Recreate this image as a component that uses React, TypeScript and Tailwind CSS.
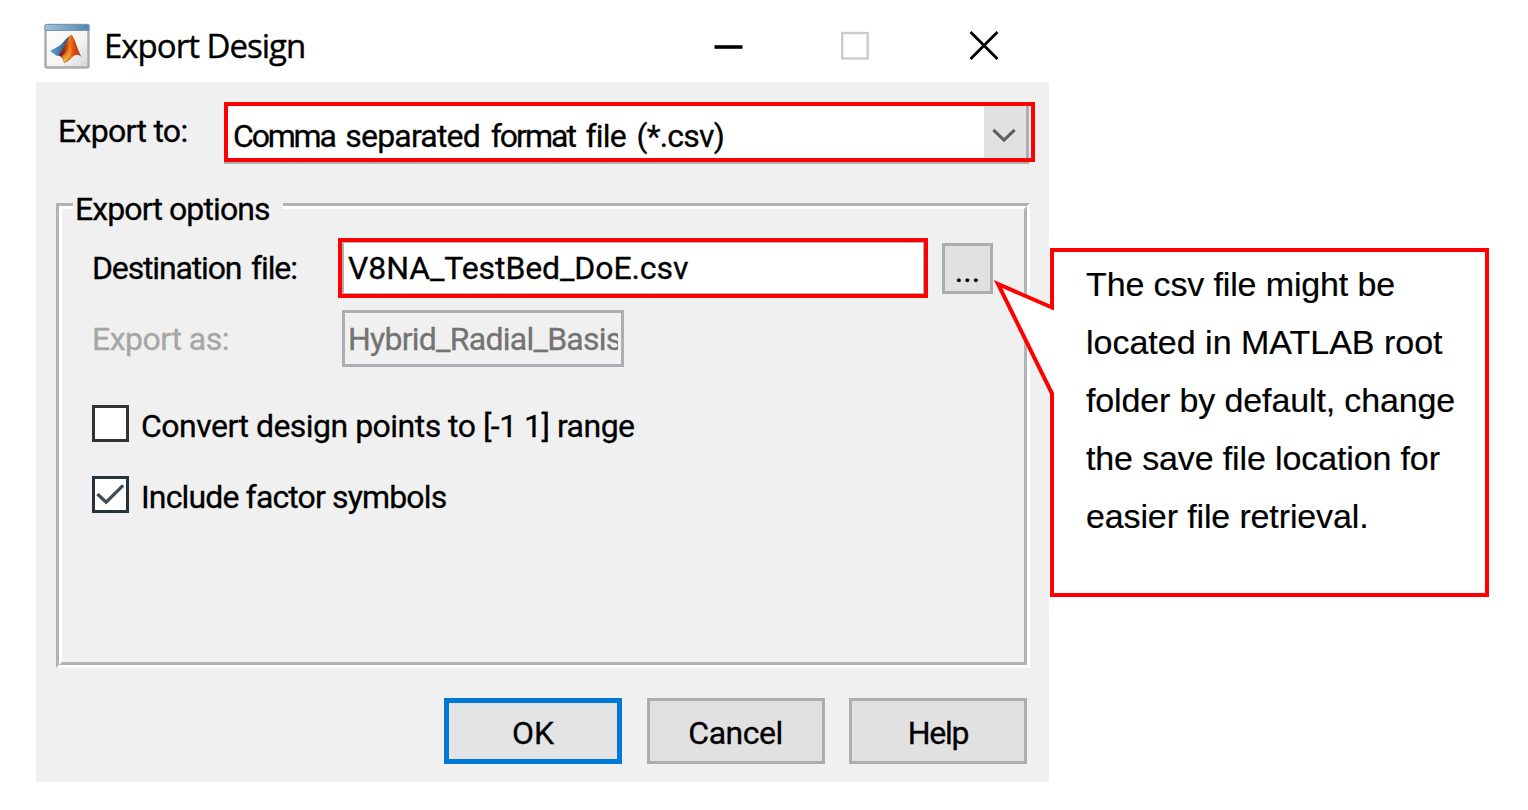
import type { ReactNode } from "react";

const dialogFont =
  "font-[Roboto,sans-serif] text-[32px] leading-[40px] whitespace-pre [-webkit-text-stroke:0.3px_currentColor]";

function MatlabIcon() {
  return (
    <svg width="46" height="46" viewBox="0 0 46 46" className="shrink-0">
      <defs>
        <linearGradient id="frame" x1="0" y1="0" x2="1" y2="1">
          <stop offset="0" stopColor="#ffffff" />
          <stop offset="0.6" stopColor="#f4f4f5" />
          <stop offset="1" stopColor="#d4d5d8" />
        </linearGradient>
        <linearGradient id="bar" x1="0" y1="0" x2="1" y2="0">
          <stop offset="0" stopColor="#a3c3dc" />
          <stop offset="1" stopColor="#4f88b4" />
        </linearGradient>
        <linearGradient id="flame" x1="0" y1="0" x2="1" y2="0">
          <stop offset="0" stopColor="#5c1f20" />
          <stop offset="0.3" stopColor="#a83214" />
          <stop offset="0.5" stopColor="#ee7a1c" />
          <stop offset="0.7" stopColor="#d9480f" />
          <stop offset="1" stopColor="#b5361a" />
        </linearGradient>
        <linearGradient id="glow" x1="0" y1="0" x2="0" y2="1">
          <stop offset="0" stopColor="#f08020" stopOpacity="0" />
          <stop offset="1" stopColor="#ffd23c" />
        </linearGradient>
        <linearGradient id="blade" x1="0" y1="0" x2="1" y2="0">
          <stop offset="0" stopColor="#5fa6d8" />
          <stop offset="1" stopColor="#24507c" />
        </linearGradient>
      </defs>
      <rect x="1.5" y="2" width="43" height="42.500" rx="1.5" fill="url(#frame)" stroke="#a9aaae" strokeWidth="2.4" />
      <rect x="1" y="1.500" width="44" height="6" rx="1" fill="url(#bar)" stroke="#7896ac" strokeWidth="1" />
      <path d="M6 28L15 23C18 21.500 20 18 23 15L26 12.500L20 29L13 33Z" fill="url(#blade)" />
      <path d="M14 32.500C19 28 22 18 27 11.500C31 14 33 26 37.500 34C34 31 32 31 28.500 34C26 37 22 40 20 39.500C19 35 17 33 14 32.500Z" fill="url(#flame)" />
      <path d="M26 20L27.500 22C28 28 27 34 21 39.500C19.500 37 19 35 18 33C22 31 24 26 26 20Z" fill="url(#glow)" />
    </svg>
  );
}

function TitleBar() {
  return (
    <header className="flex h-[82px] shrink-0 items-start bg-white pl-2">
      <div className="mt-[23px]">
        <MatlabIcon />
      </div>
      <h1 className="mt-[25px] ml-[14px] w-[300px] font-['Open_Sans',sans-serif] text-[33px] leading-[42px] font-normal tracking-[-1px] whitespace-nowrap text-black [-webkit-text-stroke:0.4px_currentColor]">
        Export Design
      </h1>
      <svg width="30" height="30" viewBox="0 0 30 30" className="mt-[31px] ml-[310px]">
        <path d="M0.500 16H28.500" stroke="#000" strokeWidth="3.6" />
      </svg>
      <svg width="30" height="30" viewBox="0 0 30 30" className="mt-[31px] ml-[97px]">
        <rect x="1.200" y="2" width="25.500" height="25.500" fill="none" stroke="#cbcbcb" strokeWidth="2.400" />
      </svg>
      <svg width="30" height="30" viewBox="0 0 30 30" className="mt-[31px] ml-[98px]">
        <path d="M1.500 1L28.500 28M28.500 1L1.500 28" stroke="#000" strokeWidth="2.800" />
      </svg>
    </header>
  );
}

function DialogButton({
  children,
  primary = false,
  tracking = "",
}: {
  children: ReactNode;
  primary?: boolean;
  tracking?: string;
}) {
  return (
    <button
      className={`${dialogFont} ${tracking} flex h-[66px] w-[178px] items-center justify-center pt-1 ${
        primary ? "border-[5px] border-[#0078d7] bg-[#e2e4e6]" : "border-[3px] border-[#adadad] bg-[#e1e1e1]"
      }`}
    >
      {children}
    </button>
  );
}

function CheckRow({ checked = false, children }: { checked?: boolean; children: ReactNode }) {
  return (
    <label className="flex h-[37px] items-center gap-[12px]">
      <span className={`size-[37px] shrink-0 border-[3px] bg-white ${checked ? "border-[#26323c]" : "border-[#333333]"}`}>
        {checked && (
          <svg width="31" height="31" viewBox="0 0 32 32">
            <path d="M2.500 15.500L11.500 24L29 6.500" fill="none" stroke="#414c55" strokeWidth="3.400" />
          </svg>
        )}
      </span>
      <span className="pt-[4px]">{children}</span>
    </label>
  );
}

function ExportOptions() {
  return (
    <section className="mt-[39px] ml-5 h-[465px] w-[974px] border-[3px] border-t-[#b3b3b3] border-r-white border-b-white border-l-[#b3b3b3]">
      <div className="h-full border-[3px] border-t-white border-r-[#b3b3b3] border-b-[#b3b3b3] border-l-white">
        <h2 className={`${dialogFont} relative -mt-[20px] ml-[11px] w-[210px] bg-[#f0f0f0] pl-[2px] font-normal tracking-[-0.9px]`}>
          Export options
        </h2>
        <div className="mt-[9px] flex items-start pl-[30px]">
          <span className={`${dialogFont} mt-[10px] w-[246px] tracking-[-1.15px] [word-spacing:3px]`}>
            Destination file:
          </span>
          <div className={`${dialogFont} h-[60px] w-[590px] border-4 border-[#ff0000] bg-white tracking-[-0.1px]`}>
            <div className="flex h-full items-center border border-l-2 border-[#b0b2b8] pl-1">
              V8NA_TestBed_DoE.csv
            </div>
          </div>
          <button className={`${dialogFont} mt-[5px] ml-[14px] flex h-[51px] w-[51px] items-center justify-center border-[3px] border-[#adadad] bg-[#e1e1e1] pt-1`}>
            ...
          </button>
        </div>
        <div className="mt-[12px] flex items-start pl-[30px] text-[#a6a6a6]">
          <span className={`${dialogFont} mt-[9px] w-[250px] tracking-[-0.5px]`}>Export as:</span>
          <div className={`${dialogFont} flex h-[57px] w-[282px] items-center border-[3px] border-[#adaeb3] pr-[3px] pl-[3px] tracking-[-0.75px] text-[#737373]`}>
            <span className="overflow-hidden">Hybrid_Radial_Basis</span>
          </div>
        </div>
        <div className={`${dialogFont} mt-[38px] flex flex-col gap-[34px] pl-[30px]`}>
          <div className="tracking-[-0.52px]">
            <CheckRow>Convert design points to [-1 1] range</CheckRow>
          </div>
          <div className="tracking-[-0.86px]">
            <CheckRow checked>Include factor symbols</CheckRow>
          </div>
        </div>
      </div>
    </section>
  );
}

function ExportDialog() {
  return (
    <main className="ml-9 flex h-[782px] w-[1013px] shrink-0 flex-col bg-[#f0f0f0] text-black">
      <TitleBar />
      <div className="flex items-start pt-5 pl-[22px]">
        <span className={`${dialogFont} mt-[9px] w-[166px] tracking-[-0.7px]`}>Export to:</span>
        <div className="h-[62px] w-[811px]">
          <div className="flex h-[60px] border-4 border-[#ff0000] bg-[#f0f0f0]">
            <div className={`${dialogFont} flex w-[756px] items-center bg-white pt-2 pl-[5px] tracking-[-0.8px]`}>
              <span className="[word-spacing:3.5px]">
                <span className="tracking-[-2.2px]">Comma</span> separated{" "}
                <span className="tracking-[-2px]">format</span> file (*.csv)
              </span>
            </div>
            <div className="flex w-[45px] items-center justify-center border-r-[3px] border-[#adadb3] bg-[#e1e1e1] pt-[7px] pr-[2px]">
              <svg width="24" height="17" viewBox="0 0 26 18">
                <path d="M1.500 3L13 14L24.500 3" fill="none" stroke="#606060" strokeWidth="3.400" />
              </svg>
            </div>
          </div>
          <div className="h-[2px] w-[805px] bg-[#b0b0b4]" />
        </div>
      </div>
      <ExportOptions />
      <footer className="mt-[30px] flex gap-[24.500px] pl-[408px]">
        <DialogButton primary>OK</DialogButton>
        <DialogButton tracking="tracking-[-0.5px]">Cancel</DialogButton>
        <DialogButton tracking="tracking-[-1.3px]">Help</DialogButton>
      </footer>
    </main>
  );
}

function Callout() {
  return (
    <aside className="relative mt-[248px] ml-px h-[349px] w-[439px] shrink-0 border-4 border-[#ff0000] bg-white pt-[3px] pl-8">
      <svg className="absolute -top-1 -left-[68px]" width="68" height="160" viewBox="0 0 68 160">
        <path d="M64 60L12 36L64 145H68V60Z" fill="#fff" />
        <path d="M66 58V59.500L12 36L66 145.500V150" fill="none" stroke="#f00" strokeWidth="4" strokeMiterlimit="10" />
      </svg>
      <p className="font-['Liberation_Sans',Arial,sans-serif] text-[34px] leading-[58px] tracking-[-0.13px] whitespace-nowrap text-black [-webkit-text-stroke:0.2px_currentColor]">
        The csv file might be<br />
        <span className="tracking-normal">located in MATLAB root</span><br />
        folder by default, change<br />
        the save file location for<br />
        easier file retrieval.
      </p>
    </aside>
  );
}

export default function App() {
  return (
    <div className="flex h-[810px] w-[1528px] items-start overflow-hidden bg-white">
      <ExportDialog />
      <Callout />
    </div>
  );
}
